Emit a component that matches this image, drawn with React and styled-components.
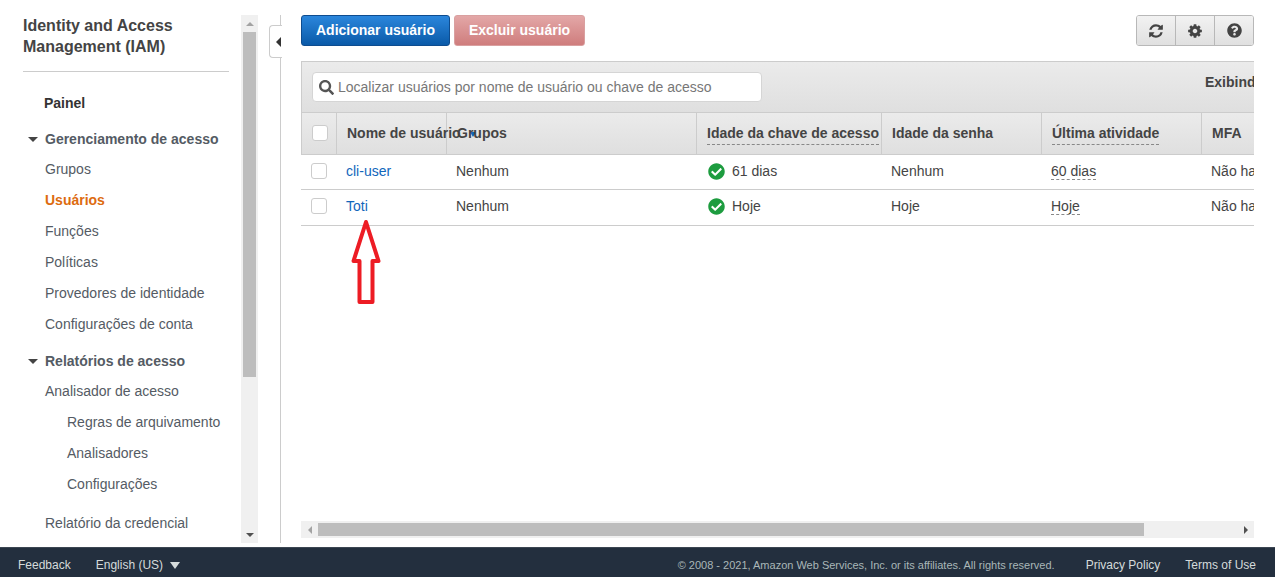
import React from 'react';
import styled, { createGlobalStyle } from 'styled-components';
import { FaQuestionCircle, FaSearch, FaCheckCircle } from 'react-icons/fa';

const GlobalStyle = createGlobalStyle`
  html, body {
    margin: 0;
    height: 100%;
    overflow: hidden;
    background: #fff;
  }
  body {
    font-family: "Liberation Sans", Arial, sans-serif;
    font-size: 14px;
    color: #444;
  }
  * { box-sizing: border-box; }
`;

const Page = styled.div`
  display: flex;
  flex-direction: column;
  height: 577px;
`;

const Body = styled.div`
  flex: 1;
  min-height: 0;
  display: flex;
  padding: 15px 21px 4px 0;
`;

const Sidebar = styled.aside`
  flex: 0 0 258px;
  display: flex;
  min-height: 0;
`;

const Nav = styled.nav`
  flex: 0 0 241px;
  overflow: hidden;
  padding-left: 23px;
`;

const NavTitle = styled.div`
  font-size: 16px;
  font-weight: bold;
  line-height: 21px;
  color: #444;
  width: 206px;
  padding-bottom: 14px;
  margin-bottom: 16px;
  border-bottom: 1px solid #ccc;
`;

const NavDash = styled.div`
  height: 31px;
  line-height: 31px;
  padding-left: 21px;
  margin-bottom: 5px;
  font-weight: bold;
  color: #333;
`;

const NavHead = styled.div`
  height: 30px;
  display: flex;
  align-items: center;
  gap: 7px;
  padding-left: 5px;
  margin-top: ${p => p.$first ? 0 : 6}px;
  font-weight: bold;
  color: #545b64;
`;

const Caret = styled.span`
  width: 0;
  height: 0;
  border-left: 5px solid transparent;
  border-right: 5px solid transparent;
  border-top: 5px solid #444;
`;

const NavItem = styled.div`
  height: 31px;
  line-height: 31px;
  padding-left: ${p => p.$sub ? 44 : 22}px;
  margin-top: ${p => p.$gap || 0}px;
  white-space: nowrap;
  color: ${p => p.$active ? '#dd6b10' : '#545b64'};
  font-weight: ${p => p.$active ? 'bold' : 'normal'};
`;

const ScrollTrackY = styled.div`
  flex: 0 0 17px;
  background: #f0f0f0;
  display: flex;
  flex-direction: column;
  align-items: center;
  justify-content: space-between;
`;

const ScrollButtonY = styled.div`
  height: 17px;
  width: 17px;
  display: flex;
  align-items: center;
  justify-content: center;
`;

const ThumbY = styled.div`
  width: 13px;
  height: 345px;
  background: #bdbdbd;
  margin-bottom: auto;
`;

const ScrollTrackX = styled.div`
  flex: 0 0 17px;
  background: #f0f0f0;
  display: flex;
  align-items: center;
  margin-top: auto;
  margin-bottom: 5px;
`;

const ScrollButtonX = styled.div`
  width: 17px;
  height: 17px;
  display: flex;
  align-items: center;
  justify-content: center;
`;

const ThumbX = styled.div`
  width: 826px;
  height: 13px;
  background: #bdbdbd;
  margin-right: auto;
`;

const TriUp = styled.span`
  border-left: 4px solid transparent;
  border-right: 4px solid transparent;
  border-bottom: 4px solid #a3a3a3;
`;

const TriDown = styled.span`
  border-left: 4px solid transparent;
  border-right: 4px solid transparent;
  border-top: 4px solid #505050;
`;

const TriLeft = styled.span`
  border-top: 4px solid transparent;
  border-bottom: 4px solid transparent;
  border-right: 4px solid #a3a3a3;
`;

const TriRight = styled.span`
  border-top: 4px solid transparent;
  border-bottom: 4px solid transparent;
  border-left: 4px solid #505050;
`;

const Main = styled.main`
  position: relative;
  flex: 1;
  min-width: 0;
  margin-left: 22px;
  padding-left: 20px;
  border-left: 1px solid #ccc;
  display: flex;
  flex-direction: column;
`;

const CollapseTab = styled.div`
  position: absolute;
  left: -12px;
  top: 10px;
  width: 13px;
  height: 33px;
  background: #fff;
  border: 1px solid #ccc;
  border-right: 0;
  border-radius: 4px 0 0 4px;
  display: flex;
  align-items: center;
  justify-content: flex-end;
  padding-right: 1px;

  &::after {
    content: '';
    border-top: 5px solid transparent;
    border-bottom: 5px solid transparent;
    border-right: 5px solid #333;
  }
`;

const Toolbar = styled.div`
  display: flex;
  gap: 4px;
  height: 31px;
  margin-bottom: 15px;
`;

const Button = styled.button`
  height: 31px;
  width: ${p => p.$width}px;
  padding: 0 0 2px;
  font: bold 14px "Liberation Sans", Arial, sans-serif;
  color: #fff;
  border-radius: 3px;
  border: 1px solid ${p => p.$danger ? '#d9a0a0' : '#0e4c8f'};
  background: ${p => p.$danger
    ? 'linear-gradient(#e3a7a7, #cf7d7d)'
    : 'linear-gradient(#2b86dc, #0a5aa8)'};
`;

const IconGroup = styled.div`
  margin-left: auto;
  display: flex;
  height: 31px;
  border: 1px solid #b8b8b8;
  border-radius: 3px;
  overflow: hidden;
`;

const IconButton = styled.div`
  width: 39px;
  display: flex;
  align-items: center;
  justify-content: center;
  color: #444;
  font-size: 15px;
  background: linear-gradient(#f2f2f2, #e0e0e0);
  &:first-child { width: 38px; }
  & + & { border-left: 1px solid #b8b8b8; }
`;

const Panel = styled.section`
  overflow: hidden;
`;

const FilterBar = styled.div`
  height: 52px;
  display: flex;
  align-items: center;
  padding-left: 10px;
  border: 1px solid #ccc;
  border-width: 1px 0 1px 1px;
  background: linear-gradient(#ebebeb, #dfdfdf);
  white-space: nowrap;
`;

const SearchBox = styled.div`
  flex: 0 0 450px;
  height: 30px;
  display: flex;
  align-items: center;
  gap: 4px;
  padding-left: 6px;
  background: #fff;
  border: 1px solid #d5d5d5;
  border-radius: 4px;
  color: #777;
  font-size: 14px;

  svg { color: #555; font-size: 15px; }
`;

const ResultCount = styled.div`
  flex: none;
  margin-left: 443px;
  margin-bottom: 10px;
  font-weight: bold;
  color: #444;
`;

const Table = styled.table`
  table-layout: fixed;
  width: 1050px;
  border-collapse: separate;
  border-spacing: 0;
`;

const HeadCell = styled.th`
  height: 42px;
  padding: 0 0 2px 10px;
  text-align: left;
  font-size: 14px;
  font-weight: bold;
  color: #444;
  white-space: nowrap;
  overflow: visible;
  background: linear-gradient(#ebebeb, #dfdfdf);
  border-bottom: 1px solid #ccc;
  & + & { border-left: 1px solid #ccc; }
  &:first-child { border-left: 1px solid #ccc; }
`;

const Hint = styled.span`
  padding-bottom: ${p => p.$drop || 0}px;
  border-bottom: 1px dashed #888;
`;

const SortMark = styled.span`
  display: inline-block;
  margin-left: 9px;
  vertical-align: 1px;
  border-left: 3px solid transparent;
  border-right: 3px solid transparent;
  border-top: 5px solid #1166bb;
`;

const Cell = styled.td`
  height: 35px;
  padding: 0 0 2px 10px;
  color: #444;
  white-space: nowrap;
  overflow: hidden;
  border-bottom: 1px solid #ccc;
  tr:last-child & { height: 36px; padding-bottom: 3px; }
`;

const Checkbox = styled.span`
  display: block;
  width: 16px;
  height: 16px;
  background: #fff;
  border: 1px solid #ccc;
  border-radius: 3px;
`;

const UserLink = styled.a`
  color: #1166bb;
  text-decoration: none;
`;

const Status = styled.span`
  display: flex;
  align-items: center;
  gap: 7px;
  padding-left: 2px;
  svg { color: #1d9c3f; font-size: 17px; }
`;

const RedArrow = styled.svg`
  position: absolute;
  left: 70px;
  top: 204px;
`;

const Footer = styled.footer`
  flex: 0 0 30px;
  display: flex;
  align-items: center;
  padding: 5px 19px 0 18px;
  background: #232f3e;
  border-top: 1px solid #3c4652;
  color: #d5dbdb;
  font-size: 12px;
  white-space: nowrap;
`;

const Language = styled.span`
  margin-left: 25px;
  display: flex;
  align-items: center;
  gap: 7px;

  &::after {
    content: '';
    border-left: 5px solid transparent;
    border-right: 5px solid transparent;
    border-top: 7px solid #d5dbdb;
  }
`;

const Copyright = styled.span`
  margin-left: auto;
  font-size: 11px;
  color: #aab7b8;
`;

const FooterLink = styled.span`
  margin-left: ${p => p.$gap}px;
`;

const RefreshIcon = () => (
  <svg width="16" height="16" viewBox="0 0 1792 1792" fill="currentColor">
    <path d="M1639 1056q0 5-1 7-64 268-268 434.5t-478 166.5q-146 0-282.5-55t-243.5-157l-129 129q-19 19-45 19t-45-19-19-45v-448q0-26 19-45t45-19h448q26 0 45 19t19 45-19 45l-137 137q71 66 161 102t187 36q134 0 250-65t186-179q11-17 53-117 8-23 30-23h192q13 0 22.5 9.5t9.5 22.5zm25-800v448q0 26-19 45t-45 19h-448q-26 0-45-19t-19-45 19-45l138-138q-148-137-349-137-134 0-250 65t-186 179q-11 17-53 117-8 23-30 23h-199q-13 0-22.5-9.5t-9.5-22.5v-7q65-268 270-434.5t480-166.5q146 0 284 55.5t245 156.5l130-129q19-19 45-19t45 19 19 45z" />
  </svg>
);

const CogIcon = () => (
  <svg width="16" height="16" viewBox="0 0 1792 1792" fill="currentColor">
    <path d="M1152 896q0-106-75-181t-181-75-181 75-75 181 75 181 181 75 181-75 75-181zm512-109v222q0 12-8 23t-20 13l-185 28q-19 54-39 91 35 50 107 138 10 12 10 25t-9 23q-27 37-99 108t-94 71q-12 0-26-9l-138-108q-44 23-91 38-16 136-29 186-7 28-36 28h-222q-14 0-24.5-8.5t-11.5-21.5l-28-184q-49-16-90-37l-141 107q-10 9-25 9-14 0-25-11-126-114-165-168-7-10-7-23 0-12 8-23 15-21 51-66.5t54-70.5q-27-50-41-99l-183-27q-13-2-21-12.5t-8-23.5v-222q0-12 8-23t19-13l186-28q14-46 39-92-40-57-107-138-10-12-10-24 0-10 9-23 26-36 98.5-107.5t94.5-71.5q13 0 26 10l138 107q44-23 91-38 16-136 29-186 7-28 36-28h222q14 0 24.5 8.5t11.5 21.5l28 184q49 16 90 37l142-107q9-9 24-9 13 0 25 10 129 119 165 170 7 8 7 22 0 12-8 23-15 21-51 66.5t-54 70.5q26 50 41 98l183 28q13 2 21 12.5t8 23.5z" />
  </svg>
);

const sections = [
  {
    title: 'Gerenciamento de acesso',
    items: [
      { label: 'Grupos' },
      { label: 'Usuários', active: true },
      { label: 'Funções' },
      { label: 'Políticas' },
      { label: 'Provedores de identidade' },
      { label: 'Configurações de conta' },
    ],
  },
  {
    title: 'Relatórios de acesso',
    items: [
      { label: 'Analisador de acesso' },
      { label: 'Regras de arquivamento', sub: true },
      { label: 'Analisadores', sub: true },
      { label: 'Configurações', sub: true },
    ],
  },
];

const users = [
  { name: 'cli-user', groups: 'Nenhum', key: '61 dias', password: 'Nenhum', last: '60 dias', mfa: 'Não habilitado' },
  { name: 'Toti', groups: 'Nenhum', key: 'Hoje', password: 'Hoje', last: 'Hoje', mfa: 'Não habilitado' },
];

const columnWidths = [35, 110, 250, 185, 160, 160, 150];

export default function App() {
  return (
    <Page>
      <GlobalStyle />
      <Body>
        <Sidebar>
          <Nav>
            <NavTitle>Identity and Access Management (IAM)</NavTitle>
            <NavDash>Painel</NavDash>
            {sections.map((section, i) => (
              <div key={section.title}>
                <NavHead $first={i === 0}><Caret />{section.title}</NavHead>
                {section.items.map(item => (
                  <NavItem key={item.label} $active={item.active} $sub={item.sub}>{item.label}</NavItem>
                ))}
              </div>
            ))}
            <NavItem $gap={8}>Relatório da credencial</NavItem>
          </Nav>
          <ScrollTrackY>
            <ScrollButtonY><TriUp /></ScrollButtonY>
            <ThumbY />
            <ScrollButtonY><TriDown /></ScrollButtonY>
          </ScrollTrackY>
        </Sidebar>

        <Main>
          <CollapseTab />
          <Toolbar>
            <Button $width={149}>Adicionar usuário</Button>
            <Button $width={131} $danger>Excluir usuário</Button>
            <IconGroup>
              <IconButton><RefreshIcon /></IconButton>
              <IconButton><CogIcon /></IconButton>
              <IconButton><FaQuestionCircle /></IconButton>
            </IconGroup>
          </Toolbar>

          <Panel>
            <FilterBar>
              <SearchBox><FaSearch />Localizar usuários por nome de usuário ou chave de acesso</SearchBox>
              <ResultCount>Exibindo 2 resultados</ResultCount>
            </FilterBar>
            <Table>
              <colgroup>
                {columnWidths.map((w, i) => <col key={i} width={w} />)}
              </colgroup>
              <thead>
                <tr>
                  <HeadCell><Checkbox /></HeadCell>
                  <HeadCell>Nome de usuário<SortMark /></HeadCell>
                  <HeadCell>Grupos</HeadCell>
                  <HeadCell><Hint $drop={3}>Idade da chave de acesso</Hint></HeadCell>
                  <HeadCell>Idade da senha</HeadCell>
                  <HeadCell><Hint $drop={3}>Última atividade</Hint></HeadCell>
                  <HeadCell>MFA</HeadCell>
                </tr>
              </thead>
              <tbody>
                {users.map(user => (
                  <tr key={user.name}>
                    <Cell><Checkbox /></Cell>
                    <Cell><UserLink href="#">{user.name}</UserLink></Cell>
                    <Cell>{user.groups}</Cell>
                    <Cell><Status><FaCheckCircle />{user.key}</Status></Cell>
                    <Cell>{user.password}</Cell>
                    <Cell><Hint>{user.last}</Hint></Cell>
                    <Cell>{user.mfa}</Cell>
                  </tr>
                ))}
              </tbody>
            </Table>
          </Panel>

          <ScrollTrackX>
            <ScrollButtonX><TriLeft /></ScrollButtonX>
            <ThumbX />
            <ScrollButtonX><TriRight /></ScrollButtonX>
          </ScrollTrackX>

          <RedArrow width="30" height="86" viewBox="0 0 30 86">
            <path d="M15 3 L27.5 42 L21.5 42 L21.5 83 L8.5 83 L8.5 42 L2.5 42 Z"
              fill="#fff" stroke="#ed1c24" strokeWidth="4" strokeLinejoin="round" />
          </RedArrow>
        </Main>
      </Body>

      <Footer>
        <span>Feedback</span>
        <Language>English (US)</Language>
        <Copyright>© 2008 - 2021, Amazon Web Services, Inc. or its affiliates. All rights reserved.</Copyright>
        <FooterLink $gap={31}>Privacy Policy</FooterLink>
        <FooterLink $gap={25}>Terms of Use</FooterLink>
      </Footer>
    </Page>
  );
}
